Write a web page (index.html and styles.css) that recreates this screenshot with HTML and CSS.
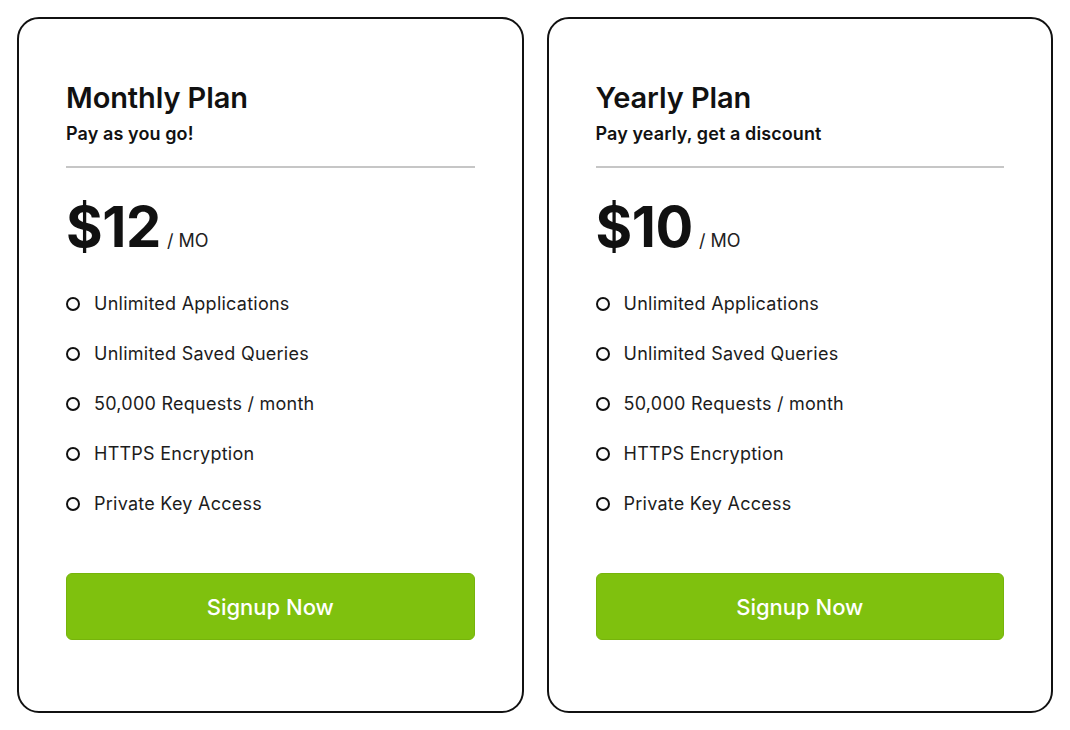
FILE: index.html
```html
<!DOCTYPE html>
<html lang="en">
<head>
  <meta charset="utf-8"/>
  <meta name="viewport" content="width=device-width, initial-scale=1.0"/>
  <title>Pricing Plans</title>
  <link rel="stylesheet" href="styles.css">
</head>
<body>
  <div class="plans">
    <div class="card">
      <h2 class="plan-name">Monthly Plan</h2>
      <p class="plan-tagline">Pay as you go!</p>
      <hr class="divider">
      <div class="price"><span class="amount">$12</span><span class="period">/ MO</span></div>
      <ul class="features">
        <li><span class="dot"></span>Unlimited Applications</li>
        <li><span class="dot"></span>Unlimited Saved Queries</li>
        <li><span class="dot"></span>50,000 Requests / month</li>
        <li><span class="dot"></span>HTTPS Encryption</li>
        <li><span class="dot"></span>Private Key Access</li>
      </ul>
      <a class="button" href="#">Signup Now</a>
    </div>

    <div class="card">
      <h2 class="plan-name">Yearly Plan</h2>
      <p class="plan-tagline">Pay yearly, get a discount</p>
      <hr class="divider">
      <div class="price"><span class="amount">$10</span><span class="period">/ MO</span></div>
      <ul class="features">
        <li><span class="dot"></span>Unlimited Applications</li>
        <li><span class="dot"></span>Unlimited Saved Queries</li>
        <li><span class="dot"></span>50,000 Requests / month</li>
        <li><span class="dot"></span>HTTPS Encryption</li>
        <li><span class="dot"></span>Private Key Access</li>
      </ul>
      <a class="button" href="#">Signup Now</a>
    </div>
  </div>
</body>
</html>
```

FILE: styles.css
```css
body {
  margin: 0;
  padding: 17px;
  background: #fff;
  color: #111;
  font-family: Inter, "Noto Sans", sans-serif;
}
.plans {
  display: grid;
  grid-template-columns: 1fr 1fr;
  gap: 23px;
}
.card {
  border: 2px solid #111;
  border-radius: 22px;
  padding: 61px 47px 71px;
  display: flex;
  flex-direction: column;
}
.plan-name {
  margin: 0;
  font-size: 29px;
  line-height: 36px;
  font-weight: 600;
  letter-spacing: -0.1px;
}
.plan-tagline {
  margin: 6px 0 0;
  font-size: 18px;
  line-height: 24px;
  font-weight: 600;
  letter-spacing: 0.1px;
}
.divider {
  margin: 20px 0 0;
  border: 0;
  height: 2px;
  background: #c6c6c6;
}
.price {
  margin-top: 31px;
  display: flex;
  align-items: baseline;
}
.amount {
  font-size: 56px;
  line-height: 56px;
  font-weight: 700;
  letter-spacing: -0.4px;
}
.period {
  margin-left: 6px;
  font-size: 18px;
  color: #222;
}
.features {
  list-style: none;
  margin: 37px 0 0;
  padding: 0;
  display: flex;
  flex-direction: column;
  gap: 26px;
}
.features li {
  display: flex;
  align-items: center;
  font-size: 18px;
  line-height: 24px;
  letter-spacing: 0.25px;
  color: #1c1c1c;
}
.dot {
  width: 10px;
  height: 10px;
  border: 2px solid #111;
  border-radius: 50%;
  margin-right: 14px;
  flex: none;
}
.button {
  margin-top: 57px;
  height: 67px;
  display: flex;
  align-items: center;
  justify-content: center;
  background: #7fc10e;
  border: 1px solid #76b40b;
  border-radius: 6px;
  box-sizing: border-box;
  color: #fff;
  font-size: 22px;
  font-weight: 500;
  text-decoration: none;
}
```
